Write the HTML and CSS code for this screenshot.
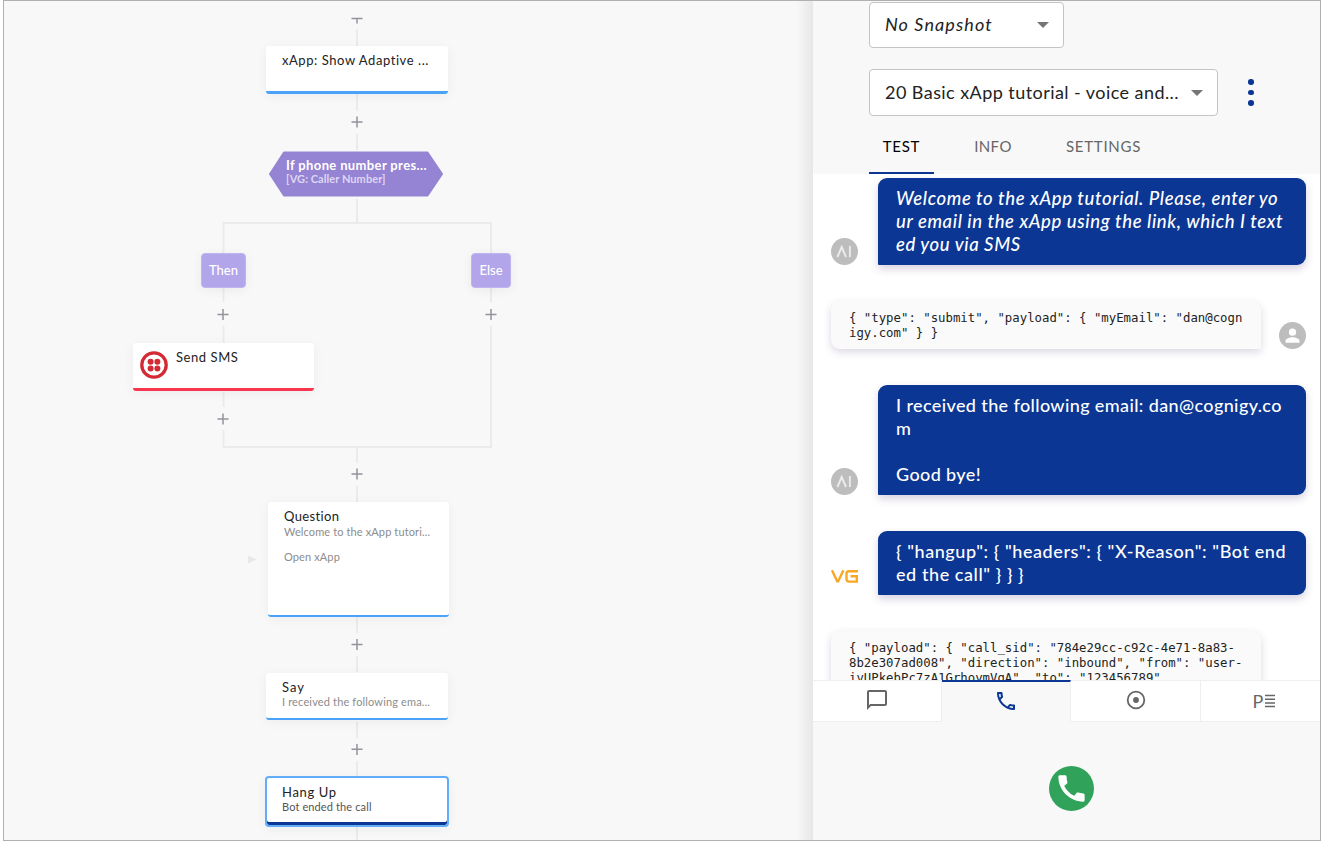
FILE: index.html
```html
<!DOCTYPE html>
<html lang="en">
<head>
<meta charset="utf-8">
<title>Flow editor</title>
<link rel="stylesheet" href="styles.css">
</head>
<body>
<div class="app">
  <main class="canvas">
    <svg class="wires" width="813" height="843" viewBox="0 0 813 843">
      <g class="line">
        <path d="M357 29V46M357 94V111M357 134V150M357 199V223M357 448V463M357 486V502M357 617V633M357 656V672M357 722V738M357 761V777M357 827V843"/>
        <path d="M223.500 302V223H491V302M223.500 326V343M223.500 392V407M223.500 430V447H491V326"/>
      </g>
      <g class="plus">
        <path d="M351.500 18.500H362.500M357 18V23.500"/>
        <path d="M351.500 122H362.500M357 116.500V127.500"/>
        <path d="M217.500 314.500H228.500M223 309V320"/>
        <path d="M485.500 314.500H496.500M491 309V320"/>
        <path d="M217.500 419H228.500M223 413.500V424.500"/>
        <path d="M351.500 474H362.500M357 468.500V479.500"/>
        <path d="M351.500 644.500H362.500M357 639V650"/>
        <path d="M351.500 749.300H362.500M357 744V755"/>
      </g>
      <path class="arrow" d="M248 555.500L256.500 559.500L248 563.500Z"/>
      <path class="hex" d="M284 152.500H427.500L442 174L427.500 195.500H284L270 174Z"/>
    </svg>
    <div class="node xapp"><div class="title">xApp: Show Adaptive ...</div></div>
    <div class="cond"><div class="cond-title">If phone number pres...</div><div class="cond-sub">[VG: Caller Number]</div></div>
    <div class="branch then">Then</div>
    <div class="branch else">Else</div>
    <div class="node sms">
      <svg class="twilio" width="28" height="28" viewBox="0 0 28 28"><circle cx="14" cy="14" r="12.200" fill="#fff" stroke="#d42a34" stroke-width="3.300"/><g fill="#d42a34"><circle cx="10.600" cy="10.700" r="3"/><circle cx="17.400" cy="10.700" r="3"/><circle cx="10.600" cy="17.400" r="3"/><circle cx="17.400" cy="17.400" r="3"/></g></svg>
      <div class="title">Send SMS</div>
    </div>
    <div class="node question"><div class="title">Question</div><div class="sub">Welcome to the xApp tutori...</div><div class="sub extra">Open xApp</div></div>
    <div class="node say"><div class="title">Say</div><div class="sub">I received the following ema...</div></div>
    <div class="node hangup"><div class="title">Hang Up</div><div class="sub">Bot ended the call</div></div>
  </main>
  <aside class="panel">
    <header class="head">
      <div class="select snapshot"><span class="italic">No Snapshot</span><i class="caret"></i></div>
      <div class="row">
        <div class="select flow"><span>20 Basic xApp tutorial - voice and...</span><i class="caret"></i></div>
        <div class="more"><i></i><i></i><i></i></div>
      </div>
      <nav class="tabs"><div class="tab active">TEST</div><div class="tab info">INFO</div><div class="tab settings">SETTINGS</div></nav>
    </header>
    <section class="chat">
      <div class="msg">
        <svg class="avatar" viewBox="0 0 27 27"><circle cx="13.500" cy="13.500" r="13.500" fill="#bdbdbd"/><path d="M6.400 19L10.700 9L15 19M18.900 8V19" fill="none" stroke="#ececec" stroke-width="1.900"/></svg>
        <div class="bubble bot italic">Welcome to the xApp tutorial. Please, enter yo
ur email in the xApp using the link, which I text
ed you via SMS</div>
      </div>
      <div class="msg user">
        <div class="bubble code">{ "type": "submit", "payload": { "myEmail": "dan@cogn
igy.com" } }</div>
        <svg class="avatar" viewBox="0 0 27 27"><circle cx="13.500" cy="13.500" r="13.500" fill="#bdbdbd"/><circle cx="13.500" cy="10.200" r="3.600" fill="#fff"/><path d="M6.500 20.700V18.800C6.500 16.500 11 15.300 13.500 15.300S20.500 16.500 20.500 18.800V20.700Z" fill="#fff"/></svg>
      </div>
      <div class="msg">
        <svg class="avatar" viewBox="0 0 27 27"><circle cx="13.500" cy="13.500" r="13.500" fill="#bdbdbd"/><path d="M6.400 19L10.700 9L15 19M18.900 8V19" fill="none" stroke="#ececec" stroke-width="1.900"/></svg>
        <div class="bubble bot">I received the following email: dan@cognigy.co
m

Good bye!</div>
      </div>
      <div class="msg">
        <svg class="avatar" viewBox="0 0 27 27"><path d="M1 2.300L6.200 13.200H7.200L12.400 2.300M27 3.200H18Q15.500 3.200 15.500 5.700V11Q15.500 13.600 18 13.600H25.800V8.200H19.500" fill="none" stroke="#f9a825" stroke-width="2.400"/></svg>
        <div class="bubble bot json">{ "hangup": { "headers": { "X-Reason": "Bot end
ed the call" } } }</div>
      </div>
      <div class="msg user">
        <div class="bubble code">{ "payload": { "call_sid": "784e29cc-c92c-4e71-8a83-
8b2e307ad008", "direction": "inbound", "from": "user-
ivUPkebPc7zA1GrhoymVgA", "to": "123456789"</div>
      </div>
    </section>
    <nav class="modes">
      <div class="mode"><svg width="24" height="24" viewBox="0 0 24 24"><path fill="#666" d="M20 2H4c-1.100 0-2 .9-2 2v18l4-4h14c1.100 0 2-.9 2-2V4c0-1.100-.9-2-2-2zm0 14H5.200L4 17.200V4h16v12z"/></svg></div>
      <div class="mode current"><svg width="24" height="24" viewBox="0 0 24 24"><path fill="#0b3694" d="M6.540 5c.06.890.210 1.760.450 2.590l-1.200 1.200c-.410-1.200-.670-2.470-.760-3.790h1.510m9.860 12.020c.850.240 1.720.390 2.600.450v1.490c-1.320-.090-2.590-.350-3.800-.750l1.200-1.190M7.500 3H4c-.550 0-1 .450-1 1 0 9.390 7.610 17 17 17 .550 0 1-.450 1-1v-3.490c0-.550-.450-1-1-1-1.240 0-2.450-.200-3.570-.570-.350-.110-.740-.030-1.020.240l-2.200 2.200c-2.830-1.450-5.150-3.760-6.590-6.590l2.200-2.200c.280-.280.360-.670.250-1.020C8.700 6.450 8.500 5.250 8.500 4c0-.550-.450-1-1-1z"/></svg></div>
      <div class="mode"><svg width="24" height="24" viewBox="0 0 24 24"><circle cx="12" cy="12" r="8.300" fill="none" stroke="#666" stroke-width="1.800"/><circle cx="12" cy="12" r="2.900" fill="#666"/></svg></div>
      <div class="mode"><span class="p">P</span><svg width="10" height="14" viewBox="0 0 10 14"><path d="M0 1.500H10M0 5.200H10M0 8.900H10M0 12.600H10" stroke="#666" stroke-width="1.500"/></svg></div>
    </nav>
    <footer class="dial">
      <div class="call"><svg width="35" height="35" viewBox="0 0 24 24"><path fill="#fff" d="M20.010 15.380c-1.230 0-2.420-.200-3.530-.560-.350-.120-.740-.030-1.010.240l-1.570 1.970c-2.830-1.350-5.480-3.900-6.890-6.830l1.950-1.660c.270-.280.350-.670.240-1.020-.370-1.110-.560-2.300-.560-3.530 0-.540-.450-.990-.990-.990H4.190C3.650 3 3 3.240 3 3.990 3 13.280 10.730 21 20.010 21c.710 0 .990-.630.990-1.180v-3.450c0-.540-.450-.990-.990-.990z"/></svg></div>
    </footer>
  </aside>
</div>
</body>
</html>
```

FILE: styles.css
```css
* { box-sizing: border-box; }
body { margin: 0; background: #fff; font-family: Lato, "Open Sans", sans-serif; }
.app { position: relative; display: flex; width: 1321px; height: 843px; overflow: hidden; background: #f8f8f8; }
/* window outline drawn above both columns */
.app::after { content: ""; position: absolute; inset: 0 0 2px 3px; border: 1px solid #b0b0b0; box-shadow: 0 0 0 4px #fff; pointer-events: none; z-index: 5; }
.italic { font-style: italic; }

/* flow canvas */
.canvas { position: relative; width: 813px; height: 843px; background: linear-gradient(to right, transparent 796px, #e7e7e7 813px), #f8f8f8; white-space: nowrap; }
.wires { position: absolute; left: 0; top: 0; }
.line { fill: none; stroke: #ebebeb; stroke-width: 2; }
.plus { fill: none; stroke: #93939b; stroke-width: 1.500; }
.arrow { fill: #e8e8e8; }
.hex { fill: #9583d3; stroke: #9583d3; stroke-width: 2; stroke-linejoin: round; }
.node { position: absolute; width: 182px; background: #fff; border-radius: 3px; border-bottom: 3px solid #4aa3f8; box-shadow: 0 2px 12px rgba(0,0,0,.05); padding: 6px 16px 0; }
.title { font-size: 13px; line-height: 16px; letter-spacing: .56px; color: #222; }
.sub { font-size: 11px; line-height: 15px; letter-spacing: .12px; color: #8c8c8c; }
.extra { margin-top: 10px; }
.xapp { left: 266px; top: 46px; height: 48px; }
.sms { left: 133px; top: 343px; width: 181px; height: 48px; border-bottom-color: #fa3550; display: flex; gap: 8px; padding-left: 7px; }
.twilio { margin-top: 2px; }
.question { left: 268px; top: 502px; width: 181px; height: 115px; border-bottom-width: 2px; }
.question .title { letter-spacing: .35px; }
.say { left: 266px; top: 673px; height: 47px; border-bottom-width: 2px; }
.say .title { letter-spacing: 1px; }
.say .sub { line-height: 14px; letter-spacing: .15px; }
.hangup { left: 265px; top: 776px; width: 184px; height: 51px; border: 2px solid #62adfa; border-radius: 4px; box-shadow: inset 0 -3px #0b3694, 0 2px 12px rgba(0,0,0,.05); padding-left: 15px; }
.hangup .title { letter-spacing: .65px; }
.hangup .sub { color: #555; line-height: 13px; }
.cond { position: absolute; left: 286px; top: 158px; }
.cond-title { font-weight: 700; font-size: 13px; line-height: 15px; letter-spacing: .37px; color: #fff; }
.cond-sub { font-weight: 700; font-size: 11px; line-height: 12px; letter-spacing: .06px; color: #ded6f4; }
.branch { position: absolute; top: 253px; height: 35px; line-height: 33px; border: 1px solid #c0b4f0; border-radius: 4px; background: #b2a5ea; color: #fff; font-size: 13px; font-weight: 500; text-align: center; box-shadow: 0 2px 12px rgba(0,0,0,.06); }
.then { left: 201px; width: 45px; }
.else { left: 471px; width: 40px; }

/* side panel */
.panel { display: flex; flex-direction: column; width: 508px; height: 843px; background: #f8f8f8; }
.head { display: flex; flex-direction: column; flex: none; height: 174px; padding: 2px 0 0 56px; }
.select { display: flex; align-items: center; justify-content: space-between; height: 46px; padding: 0 14px 0 15px; border: 1px solid #c4c4c4; border-radius: 4px; background: #fff; color: #222; font-size: 18px; letter-spacing: .44px; white-space: nowrap; }
.select span { padding-bottom: 2px; }
.snapshot { width: 195px; letter-spacing: 1.100px; }
.caret { border: 6px solid transparent; border-top-color: #757575; border-bottom: 0; }
.row { display: flex; align-items: center; gap: 30px; margin-top: 21px; }
.flow { width: 349px; height: 47px; }
.more { display: flex; flex-direction: column; gap: 5px; }
.more i { width: 5.500px; height: 5.500px; border-radius: 50%; background: #0b3694; }
.tabs { display: flex; height: 58px; font-size: 15px; line-height: 61px; color: #666; letter-spacing: .72px; }
.tab { display: flex; justify-content: center; }
.active { width: 65px; color: #000; border-bottom: 2px solid #0b3694; }
.info { width: 118px; letter-spacing: .4px; }
.settings { width: 103px; }

.chat { display: flex; flex-direction: column; gap: 36px; flex: none; height: 506px; padding: 4px 15px 0 18px; overflow: hidden; background: #fff; }
.msg { display: flex; align-items: flex-end; flex: none; gap: 20px; }
.user { gap: 18px; }
.avatar { flex: none; width: 27px; height: 27px; }
.bubble { white-space: pre; padding: 9px 18px; box-shadow: 0 4px 9px rgba(60,30,100,.2); }
.bot { width: 428px; background: #0b3694; color: #fff; font-size: 18px; font-weight: 500; line-height: 23px; letter-spacing: .38px; border-radius: 9px 9px 9px 1px; }
.bot.italic { font-size: 18.500px; letter-spacing: .6px; }
.bot.json { letter-spacing: .57px; }
.code { width: 430px; padding: 10px 18px 8px; background: #fafafa; color: #222; font: 12.330px/15px "DejaVu Sans Mono", monospace; border-radius: 9px 9px 1px 9px; box-shadow: 0 3px 8px rgba(60,30,100,.18); }

.modes { display: flex; flex: none; height: 42px; }
.mode { display: flex; flex: none; align-items: center; justify-content: center; width: 129px; padding-bottom: 2px; background: #fff; border: 1px solid #efefef; border-left-width: 0; }
.mode:nth-child(3) { width: 130px; }
.mode:last-child { width: 127px; gap: 2px; padding-bottom: 0; }
.current { background: #f8f8f8; border-top: 2px solid #0b3694; border-bottom: 0; }
.p { font-size: 18px; line-height: 18px; color: #666; }
.dial { display: flex; justify-content: center; padding: 44px 0 0 8px; }
.call { display: flex; align-items: center; justify-content: center; width: 45px; height: 45px; border-radius: 50%; background: #31a25a; }
```
